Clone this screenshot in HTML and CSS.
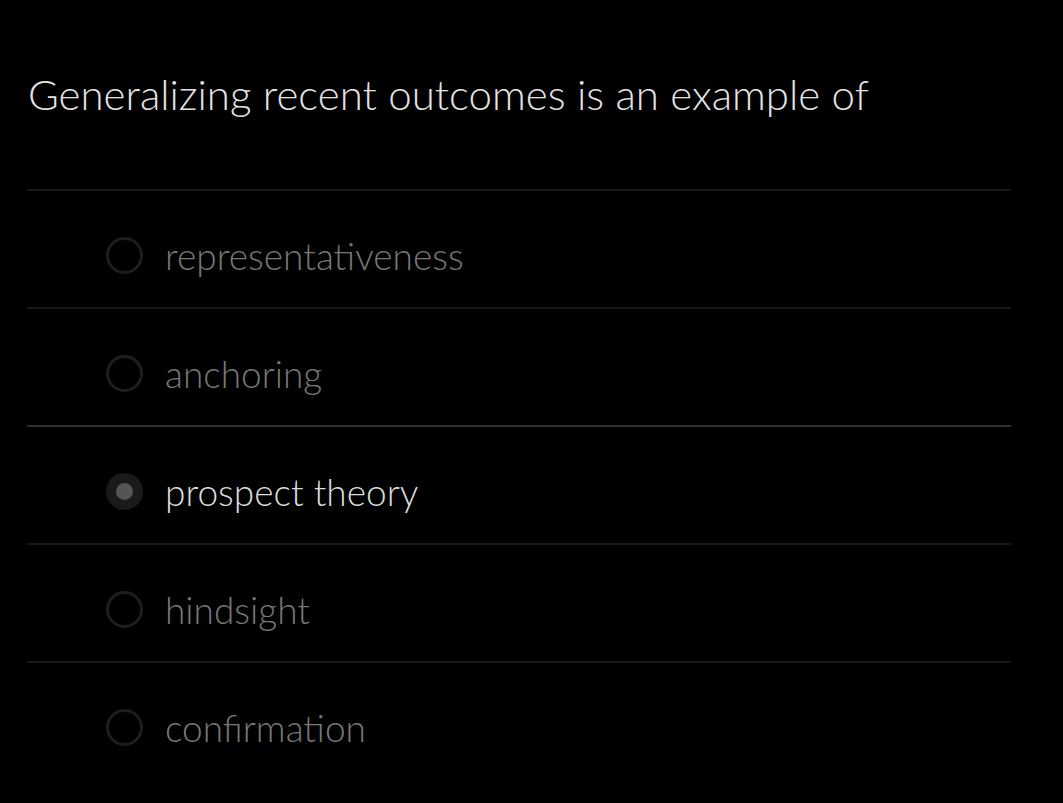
FILE: index.html
```html
<!DOCTYPE html>
<html lang="en">
<head>
<meta charset="utf-8">
<title>Question</title>
<link rel="stylesheet" href="styles.css">
</head>
<body>
<main class="quiz">
  <h1 class="question">Generalizing recent outcomes is an example of</h1>
  <ul class="options">
    <li class="option"><span class="radio"></span><span class="label">representativeness</span></li>
    <li class="option"><span class="radio"></span><span class="label">anchoring</span></li>
    <li class="option selected"><span class="radio"></span><span class="label">prospect theory</span></li>
    <li class="option"><span class="radio"></span><span class="label">hindsight</span></li>
    <li class="option"><span class="radio"></span><span class="label">confirmation</span></li>
  </ul>
</main>
</body>
</html>
```

FILE: styles.css
```css
html, body {
  margin: 0;
  padding: 0;
  background: #000;
}
body {
  font-family: "Lato Light", "Lato", "Liberation Sans", sans-serif;
  font-weight: 300;
  height: 803px;
  overflow: hidden;
}
.quiz {
  width: 984px;
  padding: 0 0 0 27px;
}
.question {
  margin: 0;
  padding: 68px 0 0 1px;
  height: 189px;
  box-sizing: border-box;
  font-size: 42px;
  font-weight: 300;
  line-height: 52px;
  color: #e4e4e4;
}
.options {
  list-style: none;
  margin: 0;
  padding: 0;
}
.option {
  display: flex;
  align-items: center;
  height: 118px;
  box-sizing: border-box;
  border-top: 2px solid #181818;
  padding: 46px 0 33px 79px;
  gap: 22px;
}
.radio {
  flex: none;
  width: 37px;
  height: 37px;
  box-sizing: border-box;
  border-radius: 50%;
  border: 3px solid #1e1e1e;
  display: flex;
  align-items: center;
  justify-content: center;
}
.label {
  font-size: 37px;
  line-height: 37px;
  color: #777;
}
.option.selected {
  border-top-color: #2e2e2e;
}
.option.selected .radio {
  background: #1a1a1a;
  border-color: #1a1a1a;
}
.option.selected .radio::after {
  content: "";
  width: 17px;
  height: 17px;
  border-radius: 50%;
  background: #555;
}
.option.selected .label {
  color: #dcdcdc;
}
```
